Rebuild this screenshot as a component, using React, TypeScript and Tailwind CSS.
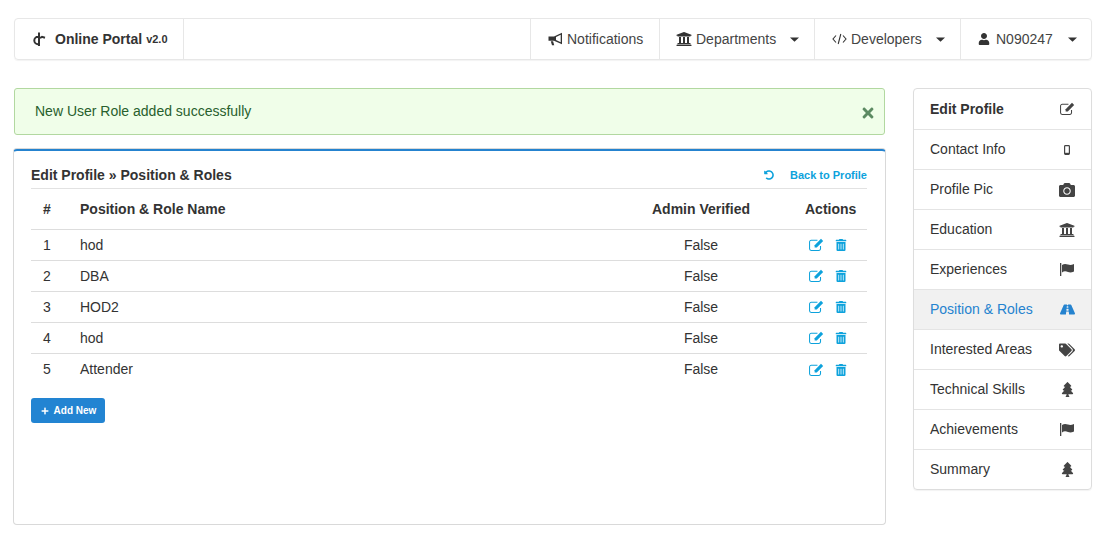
import { ReactNode } from 'react';
import {
  FaCamera,
  FaPlus,
  FaRoad,
  FaTags,
  FaTimes,
  FaTrashAlt,
  FaTree,
  FaUndoAlt,
  FaUniversity,
  FaUser,
} from 'react-icons/fa';

const roles = ['hod', 'DBA', 'HOD2', 'hod', 'Attender'];

// Font Awesome 4 look, the icon packages only carry the newer shapes
function EditIcon({ size = 15 }: { size?: number }) {
  return (
    <svg width={size} height={size * 0.875} viewBox="0 0 16 14">
      <path d="M12.300 8.500v3a1.800 1.800 0 0 1-1.800 1.800H2.300A1.800 1.800 0 0 1 .6 11.500V4.200a1.800 1.800 0 0 1 1.800-1.800H9" fill="none" stroke="currentColor" strokeWidth="1.100" />
      <path d="M6 7.700 12.800.9l2.300 2.300-6.800 6.800H6z" fill="currentColor" />
    </svg>
  );
}

function FlagIcon() {
  return (
    <svg width="14" height="13" viewBox="0 0 14 13" fill="currentColor">
      <rect x="0" y="0" width="1.300" height="13" />
      <path d="M2 2C4 .6 6 .8 8 1.600s3.500.6 6-.6v7.400c-2.500 1.200-4 1.400-6 .6s-4-1-6 .4z" />
    </svg>
  );
}

function MobileIcon() {
  return (
    <svg width="6" height="10" viewBox="0 0 6 10">
      <rect x=".6" y=".6" width="4.800" height="8.800" rx=".8" fill="none" stroke="currentColor" strokeWidth="1.200" />
      <rect x="1" y="7.800" width="4" height="1.500" fill="currentColor" />
    </svg>
  );
}

function BullhornIcon() {
  return (
    <svg width="15" height="14" viewBox="0 0 15 14" fill="currentColor">
      <path fillRule="evenodd" d="M.5 4.500H6L14 .8v11.400L6 8.800H.5zM8 4.900v3.200l4.700 2.200V2.700z" />
      <path d="M2.800 9.300h2.300l1.100 4H4z" />
    </svg>
  );
}

function CodeIcon() {
  return (
    <svg width="15" height="14" viewBox="0 0 15 14" fill="none" stroke="currentColor" strokeWidth="1.100">
      <path d="M4 3.500 1 7l3 3.500M11 3.500 14 7l-3 3.500M8.800 2 6.200 12" />
    </svg>
  );
}

function Caret() {
  return (
    <svg width="9" height="5" viewBox="0 0 9 5" className="ml-auto text-[#333]" fill="currentColor">
      <path d="M0 .5h9L4.500 4.800z" />
    </svg>
  );
}

const sideItems: { label: string; icon: ReactNode; bold?: boolean; active?: boolean }[] = [
  { label: 'Edit Profile', icon: <EditIcon />, bold: true },
  { label: 'Contact Info', icon: <MobileIcon /> },
  { label: 'Profile Pic', icon: <FaCamera size={16} /> },
  { label: 'Education', icon: <FaUniversity size={16} /> },
  { label: 'Experiences', icon: <FlagIcon /> },
  { label: 'Position & Roles', icon: <FaRoad size={15} />, active: true },
  { label: 'Interested Areas', icon: <FaTags size={16} /> },
  { label: 'Technical Skills', icon: <FaTree size={15} /> },
  { label: 'Achievements', icon: <FlagIcon /> },
  { label: 'Summary', icon: <FaTree size={15} /> },
];

function NavCell({ icon, label, caret, className }: { icon: ReactNode; label: string; caret?: boolean; className: string }) {
  return (
    <div className={`flex items-center border-l border-[#e7e7e7] text-[14px] text-[#444] ${className}`}>
      <span className="flex w-[16px] shrink-0 justify-center text-[#333]">{icon}</span>
      <span className="ml-[4px]">{label}</span>
      {caret && <Caret />}
    </div>
  );
}

export default function App() {
  return (
    <div className="min-h-[540px] bg-white pt-[18px] pl-[14px] font-['Liberation_Sans',Arial,sans-serif] text-[14px] text-[#333]">
      <header className="flex h-[42px] w-[1078px] items-stretch rounded-[4px] border border-[#e7e7e7] shadow-[0_1px_1px_rgba(0,0,0,0.05)]">
        <div className="flex w-[169px] items-center border-r border-[#e7e7e7] pl-[16px]">
          <svg width="16" height="16" viewBox="0 0 16 16" fill="none" stroke="#333" strokeWidth="2">
            <path d="M7 5.800a3.700 3.700 0 1 0 0 7.400M8 1.500v13.500M9 7l2-1.200 3 1" />
          </svg>
          <span className="ml-[8px] font-bold">Online Portal</span>
          <span className="ml-[4px] text-[11px] font-bold">v2.0</span>
        </div>
        <div className="ml-auto flex">
          <NavCell className="w-[129px] pl-[16px]" icon={<BullhornIcon />} label="Notifications" />
          <NavCell className="w-[155px] pr-[15px] pl-[16px]" icon={<FaUniversity size={16} />} label="Departments" caret />
          <NavCell className="w-[146px] pr-[15px] pl-[16px]" icon={<CodeIcon />} label="Developers" caret />
          <NavCell className="w-[131px] pr-[14px] pl-[15px]" icon={<FaUser size={12} />} label="N090247" caret />
        </div>
      </header>

      <div className="mt-[28px] flex items-start">
        <main className="-ml-px w-[873px]">
          <div className="ml-px flex h-[47px] w-[871px] items-center justify-between rounded-[3px] border border-[#b2d8a0] bg-[#f0fee9] pr-[8px] pl-[20px] text-[#28602d]">
            <span>New User Role added successfully</span>
            <FaTimes size={16} className="mt-[3px] text-[#5c8a62]" />
          </div>

          <section className="mt-[14px] h-[376px] rounded-[4px] border border-t-2 border-[#d9d9d9] border-t-[#2583cf] pr-[18px] pl-[17px] shadow-[0_-1px_0_#d9d9d9]">
            <div className="flex h-[38px] items-center justify-between border-b border-[#e2e2e2] pt-[11px]">
              <h2 className="font-bold">Edit Profile » Position &amp; Roles</h2>
              <a className="flex items-center text-[11px] font-bold text-[#0da2dc]">
                <FaUndoAlt size={10} className="mr-[16px]" />
                Back to Profile
              </a>
            </div>

            <div className="grid h-[41px] grid-cols-[37px_1fr_180px_76px] items-center border-b border-[#ddd] font-bold">
              <span className="pl-[12px]">#</span>
              <span className="pl-[12px]">Position &amp; Role Name</span>
              <span className="text-center">Admin Verified</span>
              <span className="pl-[14px]">Actions</span>
            </div>

            {roles.map((role, i) => (
              <div
                key={i}
                className={`grid h-[31px] grid-cols-[37px_1fr_180px_76px] items-center ${i < roles.length - 1 ? 'border-b border-[#ddd]' : ''}`}
              >
                <span className="pl-[12px]">{i + 1}</span>
                <span className="pl-[12px]">{role}</span>
                <span className="text-center">False</span>
                <span className="flex items-center pl-[18px] text-[#0da2dc]">
                  <EditIcon size={15} />
                  <FaTrashAlt size={12} className="ml-[11px]" />
                </span>
              </div>
            ))}

            <button className="mt-[13px] flex h-[25px] w-[74px] items-center justify-center rounded-[3px] bg-[#2284d2] pl-[1px] text-[10px] font-bold text-white">
              <FaPlus size={8} className="mr-[5px]" />
              Add New
            </button>
          </section>
        </main>

        <aside className="ml-[27px] w-[179px] overflow-hidden rounded-[4px] border border-[#ddd] shadow-[0_1px_1px_rgba(0,0,0,0.05)]">
          {sideItems.map((item, i) => (
            <div
              key={item.label}
              className={`flex h-[40px] items-center justify-between px-[16px] ${i > 0 ? 'border-t border-[#e4e4e4]' : ''} ${item.active ? 'bg-[#f1f1f1] text-[#2583cf]' : ''} ${item.bold ? 'font-bold' : ''}`}
            >
              <span>{item.label}</span>
              <span className={`flex w-[16px] justify-center ${item.active ? 'text-[#2583cf]' : 'text-[#444]'}`}>{item.icon}</span>
            </div>
          ))}
        </aside>
      </div>
    </div>
  );
}
